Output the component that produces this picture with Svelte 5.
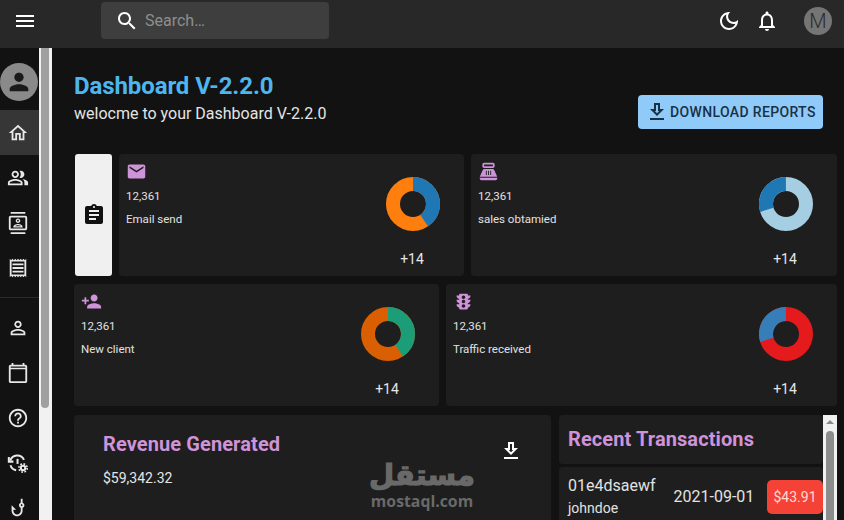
<script lang="ts">
  const icons: Record<string, string> = {
    menu: 'M3 18h18v-2H3v2zm0-5h18v-2H3v2zm0-7v2h18V6H3z',
    search: 'M15.5 14h-.79l-.28-.27C15.41 12.59 16 11.11 16 9.5 16 5.91 13.09 3 9.5 3S3 5.91 3 9.5 5.91 16 9.5 16c1.61 0 3.09-.59 4.23-1.57l.27.28v.79l5 4.99L20.49 19l-4.99-5zm-6 0C7.01 14 5 11.99 5 9.5S7.01 5 9.5 5 14 7.01 14 9.5 11.99 14 9.5 14z',
    moon: 'M9.37 5.51c-.18.64-.27 1.31-.27 1.99 0 4.08 3.32 7.4 7.4 7.4.68 0 1.35-.09 1.99-.27C17.45 17.19 14.93 19 12 19c-3.86 0-7-3.14-7-7 0-2.93 1.81-5.45 4.37-6.49zM12 3c-4.97 0-9 4.03-9 9s4.03 9 9 9 9-4.03 9-9c0-.46-.04-.92-.1-1.36-.98 1.37-2.58 2.26-4.4 2.26-2.98 0-5.4-2.42-5.4-5.4 0-1.81.89-3.42 2.26-4.4-.44-.06-.9-.1-1.36-.1z',
    bell: 'M12 22c1.1 0 2-.9 2-2h-4c0 1.1.9 2 2 2zm6-6v-5c0-3.07-1.63-5.64-4.5-6.32V4c0-.83-.67-1.5-1.5-1.5s-1.5.67-1.5 1.5v.68C7.64 5.36 6 7.92 6 11v5l-2 2v1h16v-1l-2-2zm-2 1H8v-6c0-2.48 1.51-4.5 4-4.5s4 2.02 4 4.5v6z',
    person: 'M12 12c2.21 0 4-1.79 4-4s-1.79-4-4-4-4 1.79-4 4 1.79 4 4 4zm0 2c-2.67 0-8 1.34-8 4v2h16v-2c0-2.66-5.33-4-8-4z',
    home: 'M12 5.69l5 4.5V18h-2v-6H9v6H7v-7.81l5-4.5M12 3L2 12h3v8h6v-6h2v6h6v-8h3L12 3z',
    people: 'M16.67 13.13C18.04 14.06 19 15.32 19 17v3h4v-3c0-2.18-3.57-3.47-6.33-3.87zM15 12c2.21 0 4-1.79 4-4s-1.79-4-4-4c-.47 0-.91.1-1.33.24C14.5 5.27 15 6.58 15 8s-.5 2.73-1.33 3.76c.42.14.86.24 1.33.24zM9 12c2.21 0 4-1.79 4-4s-1.79-4-4-4-4 1.79-4 4 1.79 4 4 4zm0-6c1.1 0 2 .9 2 2s-.9 2-2 2-2-.9-2-2 .9-2 2-2zM9 13c-2.67 0-8 1.34-8 4v3h16v-3c0-2.66-5.33-4-8-4zm6 5H3v-.99C3.2 16.29 6.3 15 9 15s5.8 1.29 6 2v1z',
    contacts: 'M20 0H4v2h16V0zM4 24h16v-2H4v2zM20 4H4c-1.1 0-2 .9-2 2v12c0 1.1.9 2 2 2h16c1.1 0 2-.9 2-2V6c0-1.1-.9-2-2-2zm0 14H4V6h16v12zm-8-6c1.38 0 2.5-1.12 2.5-2.5S13.38 7 12 7 9.5 8.12 9.5 9.5 10.62 12 12 12zm0-3.5c.55 0 1 .45 1 1s-.45 1-1 1-1-.45-1-1 .45-1 1-1zm5 7.49C17 13.9 13.69 13 12 13s-5 .9-5 2.99V17h10v-1.01zm-8.19-.49c.61-.52 2.03-1 3.19-1 1.17 0 2.59.48 3.2 1H8.81z',
    receipt: 'M19.5 3.5L18 2l-1.5 1.5L15 2l-1.5 1.5L12 2l-1.5 1.5L9 2 7.5 3.5 6 2 4.5 3.5 3 2v20l1.5-1.5L6 22l1.5-1.5L9 22l1.5-1.5L12 22l1.5-1.5L15 22l1.5-1.5L18 22l1.5-1.5L21 22V2l-1.5 1.5zM19 19.09H5V4.91h14v14.18zM6 15h12v2H6zm0-4h12v2H6zm0-4h12v2H6z',
    personOutline: 'M12 5.9c1.16 0 2.1.94 2.1 2.1s-.94 2.1-2.1 2.1S9.9 9.16 9.9 8s.94-2.1 2.1-2.1m0 9c2.97 0 6.1 1.46 6.1 2.1v1.1H5.9V17c0-.64 3.13-2.1 6.1-2.1M12 4C9.79 4 8 5.79 8 8s1.79 4 4 4 4-1.79 4-4-1.79-4-4-4zm0 9c-2.67 0-8 1.34-8 4v3h16v-3c0-2.66-5.33-4-8-4z',
    calendar: 'M20 3h-1V1h-2v2H7V1H5v2H4c-1.1 0-2 .9-2 2v16c0 1.1.9 2 2 2h16c1.1 0 2-.9 2-2V5c0-1.1-.9-2-2-2zm0 18H4V8h16v13zM4 5h16v1.4H4z',
    help: 'M11 18h2v-2h-2v2zm1-16C6.48 2 2 6.48 2 12s4.48 10 10 10 10-4.48 10-10S17.52 2 12 2zm0 18c-4.41 0-8-3.59-8-8s3.59-8 8-8 8 3.59 8 8-3.59 8-8 8zm0-14c-2.21 0-4 1.79-4 4h2c0-1.1.9-2 2-2s2 .9 2 2c0 2-3 1.75-3 5h2c0-2.25 3-2.5 3-5 0-2.21-1.79-4-4-4z',
    hook: 'M19 9c0-1.3-.84-2.4-2-2.82V2h-2v4.18C13.84 6.6 13 7.7 13 9s.84 2.4 2 2.82V15c0 2.21-1.79 4-4 4s-4-1.79-4-4v-1h3L5 9v6c0 3.31 2.69 6 6 6s6-2.69 6-6v-3.18c1.16-.42 2-1.52 2-2.82zm-3 1c-.55 0-1-.45-1-1s.45-1 1-1 1 .45 1 1-.45 1-1 1z',
    email: 'M20 4H4c-1.1 0-1.99.9-1.99 2L2 18c0 1.1.9 2 2 2h16c1.1 0 2-.9 2-2V6c0-1.1-.9-2-2-2zm0 4l-8 5-8-5V6l8 5 8-5v2z',
    register: 'M17 2H7c-1.1 0-2 .9-2 2v2c0 1.1.9 2 2 2h10c1.1 0 2-.9 2-2V4c0-1.1-.9-2-2-2zm0 4H7V4h10v2zM20 22H4c-1.1 0-2-.9-2-2v-1h20v1c0 1.1-.9 2-2 2zM18.53 10.19C18.21 9.47 17.49 9 16.7 9H7.3c-.79 0-1.51.47-1.83 1.19L2 18h20l-3.47-7.81zM9 11h1v5H9zm2.5 0h1v5h-1zm2.5 0h1v5h-1z',
    personAdd: 'M15 12c2.21 0 4-1.79 4-4s-1.79-4-4-4-4 1.79-4 4 1.79 4 4 4zm-9-2V7H4v3H1v2h3v3h2v-3h3v-2H6zm9 4c-2.67 0-8 1.34-8 4v2h16v-2c0-2.66-5.33-4-8-4z',
    traffic: 'M20 10h-3V8.86c1.72-.45 3-2 3-3.86h-3V4c0-.55-.45-1-1-1H8c-.55 0-1 .45-1 1v1H4c0 1.86 1.28 3.41 3 3.86V10H4c0 1.86 1.28 3.41 3 3.86V15H4c0 1.86 1.28 3.41 3 3.86V20c0 .55.45 1 1 1h8c.55 0 1-.45 1-1v-1.14c1.72-.45 3-2 3-3.86h-3v-1.14c1.72-.45 3-2 3-3.86zm-8 9c-1.11 0-2-.9-2-2s.89-2 2-2c1.1 0 2 .9 2 2s-.89 2-2 2zm0-5c-1.11 0-2-.9-2-2s.89-2 2-2c1.1 0 2 .9 2 2s-.89 2-2 2zm0-5c-1.11 0-2-.9-2-2 0-1.11.89-2 2-2 1.1 0 2 .89 2 2 0 1.1-.89 2-2 2z',
    assignment: 'M19 3h-4.18C14.4 1.84 13.3 1 12 1c-1.3 0-2.4.84-2.82 2H5c-1.1 0-2 .9-2 2v14c0 1.1.9 2 2 2h14c1.1 0 2-.9 2-2V5c0-1.1-.9-2-2-2zm-7 0c.55 0 1 .45 1 1s-.45 1-1 1-1-.45-1-1 .45-1 1-1zm2 14H7v-2h7v2zm3-4H7v-2h10v2zm0-4H7V7h10v2z',
    download: 'M19 9h-4V3H9v6H5l7 7 7-7zm-8 2V5h2v6h1.17L12 13.17 9.83 11H11zm-6 7h14v2H5z'
  }

  const navTop = ['home', 'people', 'contacts', 'receipt']
  const navBottom = ['personOutline', 'calendar', 'help', 'history', 'hook']

  // start and sweep of the small slice, in degrees clockwise from the top
  const row1 = [
    { icon: 'email', label: 'Email send', start: 0, sweep: 146, a: '#1f78b4', b: '#ff7f0e' },
    { icon: 'register', label: 'sales obtamied', start: 253, sweep: 107, a: '#1f78b4', b: '#a6cee3' }
  ]
  const row2 = [
    { icon: 'personAdd', label: 'New client', start: 0, sweep: 146, a: '#1b9e77', b: '#d95f02' },
    { icon: 'traffic', label: 'Traffic received', start: 253, sweep: 107, a: '#377eb8', b: '#e41a1c' }
  ]
</script>

{#snippet icon(name: string, size: number)}
  <svg class="icon" width={size} height={size} viewBox="0 0 24 24" fill="currentColor" fill-rule="evenodd">
    <path d={icons[name]} />
  </svg>
{/snippet}

{#snippet stat(s: any)}
  <div class="card stat">
    <div class="stat-left">
      <span class="stat-icon">{@render icon(s.icon, 21)}</span>
      <p class="num">12,361</p>
      <p class="label">{s.label}</p>
    </div>
    <div class="stat-right">
      <svg class="donut" width="54" height="54" viewBox="0 0 54 54" fill="none" stroke-width="14">
        <circle cx="27" cy="27" r="20" stroke={s.b} />
        <circle
          cx="27"
          cy="27"
          r="20"
          stroke={s.a}
          pathLength="360"
          stroke-dasharray="{s.sweep} 360"
          transform="rotate({s.start - 90} 27 27)"
        />
      </svg>
      <span class="delta">+14</span>
    </div>
  </div>
{/snippet}

<div class="app">
  <header>
    <span class="menu">{@render icon('menu', 24)}</span>
    <div class="search">
      {@render icon('search', 24)}
      <span>Search…</span>
    </div>
    <div class="actions">
      {@render icon('moon', 24)}
      {@render icon('bell', 24)}
      <span class="user">M</span>
    </div>
  </header>

  <div class="body">
    <nav>
      <div class="profile">
        <div class="avatar">{@render icon('person', 28)}</div>
      </div>
      {#each navTop as name, i}
        <div class="nav-item" class:active={i === 0}>{@render icon(name, 22)}</div>
      {/each}
      <hr />
      {#each navBottom as name}
        <div class="nav-item">
          {#if name === 'history'}
            <svg class="icon" width="22" height="22" viewBox="0 0 24 24" fill="none" stroke="currentColor" stroke-width="2.2">
              <path d="M3.5 9.5A8 8 0 0 1 18.5 8.5" />
              <path d="M2 5.5v5h5" />
              <path d="M3.8 14.5A8 8 0 0 0 10 20" />
              <path d="M11.5 7.5v5.5" />
              <circle cx="17.5" cy="17.5" r="2.4" stroke-width="2.2" />
              <circle cx="17.5" cy="17.5" r="4.5" stroke-width="1.8" stroke-dasharray="1.8 1.73" />
            </svg>
          {:else}
            {@render icon(name, 22)}
          {/if}
        </div>
      {/each}
    </nav>

    <div class="rail"><div class="rail-thumb"></div></div>

    <main>
      <section class="top">
        <div>
          <h1>Dashboard V-2.2.0</h1>
          <p class="sub">welocme to your Dashboard V-2.2.0</p>
        </div>
        <button>{@render icon('download', 24)}<span>DOWNLOAD REPORTS</span></button>
      </section>

      <section class="row row1">
        <div class="clip">{@render icon('assignment', 24)}</div>
        {#each row1 as s}
          {@render stat(s)}
        {/each}
      </section>

      <section class="row row2">
        {#each row2 as s}
          {@render stat(s)}
        {/each}
      </section>

      <section class="row3">
        <div class="card revenue">
          <div>
            <h2>Revenue Generated</h2>
            <p class="amount">$59,342.32</p>
          </div>
          <span class="dl">{@render icon('download', 24)}</span>
        </div>
        <div class="transactions">
          <div class="tx-list">
            <div class="card tx-head"><h2>Recent Transactions</h2></div>
            <div class="card tx">
              <div>
                <p class="tx-id">01e4dsaewf</p>
                <p class="tx-user">johndoe</p>
              </div>
              <span class="tx-date">2021-09-01</span>
              <span class="badge">$43.91</span>
            </div>
          </div>
          <div class="tx-bar">
            <span class="arrow"></span>
            <span class="tx-thumb"></span>
          </div>
        </div>
      </section>
    </main>
  </div>

  <div class="mark">
    <span class="mark-ar" dir="rtl">مستقل</span>
    <span class="mark-en">mostaql.com</span>
  </div>
</div>

<style>
  :global(body) {
    margin: 0;
    background: #121212;
  }

  p,
  h1,
  h2 {
    margin: 0;
  }

  .app {
    position: relative;
    display: flex;
    flex-direction: column;
    height: 520px;
    overflow: hidden;
    font-family: Roboto, "Liberation Sans", sans-serif;
    color: #eee;
  }

  .icon {
    display: block;
    flex: none;
  }

  header {
    display: flex;
    align-items: center;
    flex: none;
    box-sizing: border-box;
    height: 48px;
    padding: 0 12px 6px 13px;
    background: #282828;
    color: #fff;
  }

  .menu {
    width: 88px;
  }

  .search {
    display: flex;
    align-items: center;
    gap: 6px;
    box-sizing: border-box;
    width: 228px;
    height: 37px;
    margin-bottom: 1px;
    padding-left: 14px;
    border-radius: 4px;
    background: #3e3e3e;
    font-size: 16px;
    color: #8e8e8e;
  }

  .search .icon {
    color: #fff;
  }

  .actions {
    display: flex;
    align-items: center;
    gap: 14px;
    margin-left: auto;
  }

  .user {
    display: grid;
    place-items: center;
    width: 28px;
    height: 28px;
    margin-left: 11px;
    border-radius: 50%;
    background: #757575;
    font-size: 20px;
    font-weight: 300;
    color: #2c2c2c;
  }

  .body {
    display: flex;
    flex: 1;
    min-height: 0;
  }

  nav {
    flex: none;
    width: 39px;
    background: #121212;
    color: #e8e8e8;
  }

  .profile {
    height: 62px;
    box-sizing: border-box;
    padding-top: 15px;
  }

  .avatar {
    display: grid;
    place-items: center;
    width: 38px;
    height: 38px;
    border-radius: 50%;
    background: #8a8a8a;
    color: #1b1b1b;
  }

  .nav-item {
    display: grid;
    place-items: center;
    height: 45px;
    padding-right: 4px;
  }

  .nav-item.active {
    background: #363636;
  }

  hr {
    height: 1px;
    margin: 7px 0 7px;
    border: 0;
    background: #2b2b2b;
  }

  .rail {
    flex: none;
    width: 13px;
    background: #f1f1f1;
  }

  .rail-thumb {
    width: 8px;
    height: 360px;
    margin-left: 2px;
    border-radius: 0 0 4px 4px;
    background: #a0a0a0;
  }

  main {
    flex: 1;
    min-width: 0;
    box-sizing: border-box;
    padding: 24px 7px 0 22px;
    background: #121212;
  }

  .top {
    display: flex;
    justify-content: space-between;
    align-items: flex-start;
    height: 82px;
    padding-right: 14px;
  }

  h1 {
    font-size: 24px;
    line-height: 28px;
    font-weight: 700;
    letter-spacing: -0.1px;
    color: #4db6ee;
  }

  .sub {
    margin-top: 2px;
    font-size: 16px;
    line-height: 24px;
    color: #e4e4e4;
  }

  button {
    display: flex;
    align-items: center;
    gap: 1px;
    box-sizing: border-box;
    width: 185px;
    height: 34px;
    margin-top: 23px;
    padding: 0 0 0 7px;
    border: 0;
    border-radius: 4px;
    background: #90caf9;
    font-family: inherit;
    font-size: 14px;
    font-weight: 500;
    letter-spacing: 0.35px;
    color: #1a3146;
  }

  .row {
    display: grid;
    gap: 7px;
    height: 122px;
    margin-bottom: 8px;
  }

  .row1 {
    grid-template-columns: 37px 345px 366px;
    padding-left: 1px;
  }

  .row2 {
    grid-template-columns: 365px 391px;
  }

  .clip {
    display: grid;
    place-items: center;
    border-radius: 3px;
    background: #f0f0f0;
    color: #111;
  }

  .card {
    border-radius: 4px;
    background: #1e1e1e;
  }

  .stat {
    display: flex;
    justify-content: space-between;
    padding-left: 7px;
  }

  .stat-left {
    padding-top: 7px;
  }

  .stat-icon {
    display: block;
    color: #ce93d8;
  }

  .num {
    margin-top: 6px;
    font-size: 11.5px;
    line-height: 16px;
    color: #e2e2e2;
  }

  .label {
    margin-top: 7px;
    font-size: 11.5px;
    line-height: 16px;
    color: #e2e2e2;
  }

  .stat-right {
    display: flex;
    flex-direction: column;
    align-items: center;
    width: 104px;
    padding-top: 23px;
  }

  .donut {
    margin-left: 2px;
  }

  .delta {
    margin-top: 20px;
    font-size: 14px;
    line-height: 16px;
    color: #e6e6e6;
  }

  .row3 {
    display: grid;
    grid-template-columns: 477px 278px;
    gap: 8px;
    margin-top: 9px;
  }

  .revenue {
    display: flex;
    justify-content: space-between;
    height: 140px;
    padding: 17px 28px 0 29px;
  }

  h2 {
    font-size: 20px;
    line-height: 24px;
    font-weight: 700;
    letter-spacing: 0.1px;
    color: #ce93d8;
  }

  .amount {
    margin-top: 12px;
    font-size: 14px;
    line-height: 20px;
    color: #e6e6e6;
  }

  .dl {
    margin-top: 7px;
    color: #fff;
  }

  .transactions {
    display: flex;
  }

  .tx-list {
    flex: none;
    width: 264px;
  }

  .tx-head {
    box-sizing: border-box;
    height: 49px;
    padding: 12px 9px;
  }

  .tx {
    display: flex;
    align-items: flex-start;
    margin-top: 3px;
    height: 60px;
    padding: 0 0 0 9px;
  }

  .tx-id {
    margin-top: 9px;
    font-size: 16px;
    line-height: 20px;
    color: #e2e2e2;
  }

  .tx-user {
    margin-top: 3px;
    font-size: 14px;
    line-height: 18px;
    color: #e2e2e2;
  }

  .tx-date {
    margin: 21px auto 0 18px;
    font-size: 16px;
    line-height: 18px;
    color: #e2e2e2;
  }

  .badge {
    display: grid;
    place-items: center;
    width: 56px;
    height: 34px;
    margin-top: 13px;
    border-radius: 5px;
    background: #f44336;
    font-size: 14px;
    color: #ffd9d5;
  }

  .tx-bar {
    display: flex;
    flex-direction: column;
    align-items: center;
    flex: none;
    width: 14px;
    height: 140px;
    background: #f1f1f1;
  }

  .arrow {
    margin-top: 5px;
    border-left: 4px solid transparent;
    border-right: 4px solid transparent;
    border-bottom: 4px solid #8a8a8a;
  }

  .tx-thumb {
    width: 8px;
    height: 120px;
    margin-top: 7px;
    border-radius: 4px;
    background: #8c8c8c;
  }

  /* watermark sits over the page */
  .mark {
    position: absolute;
    left: 371px;
    top: 458px;
    display: flex;
    flex-direction: column;
    align-items: center;
    width: 102px;
    color: #696969;
  }

  .mark-ar {
    height: 35px;
    font-family: "DejaVu Sans", sans-serif;
    font-size: 29px;
    line-height: 35px;
    font-weight: 700;
    -webkit-text-stroke: 1.2px #696969;
  }

  .mark-en {
    font-family: "Open Sans", sans-serif;
    font-size: 15.8px;
    line-height: 16px;
    font-weight: 700;
  }
</style>
